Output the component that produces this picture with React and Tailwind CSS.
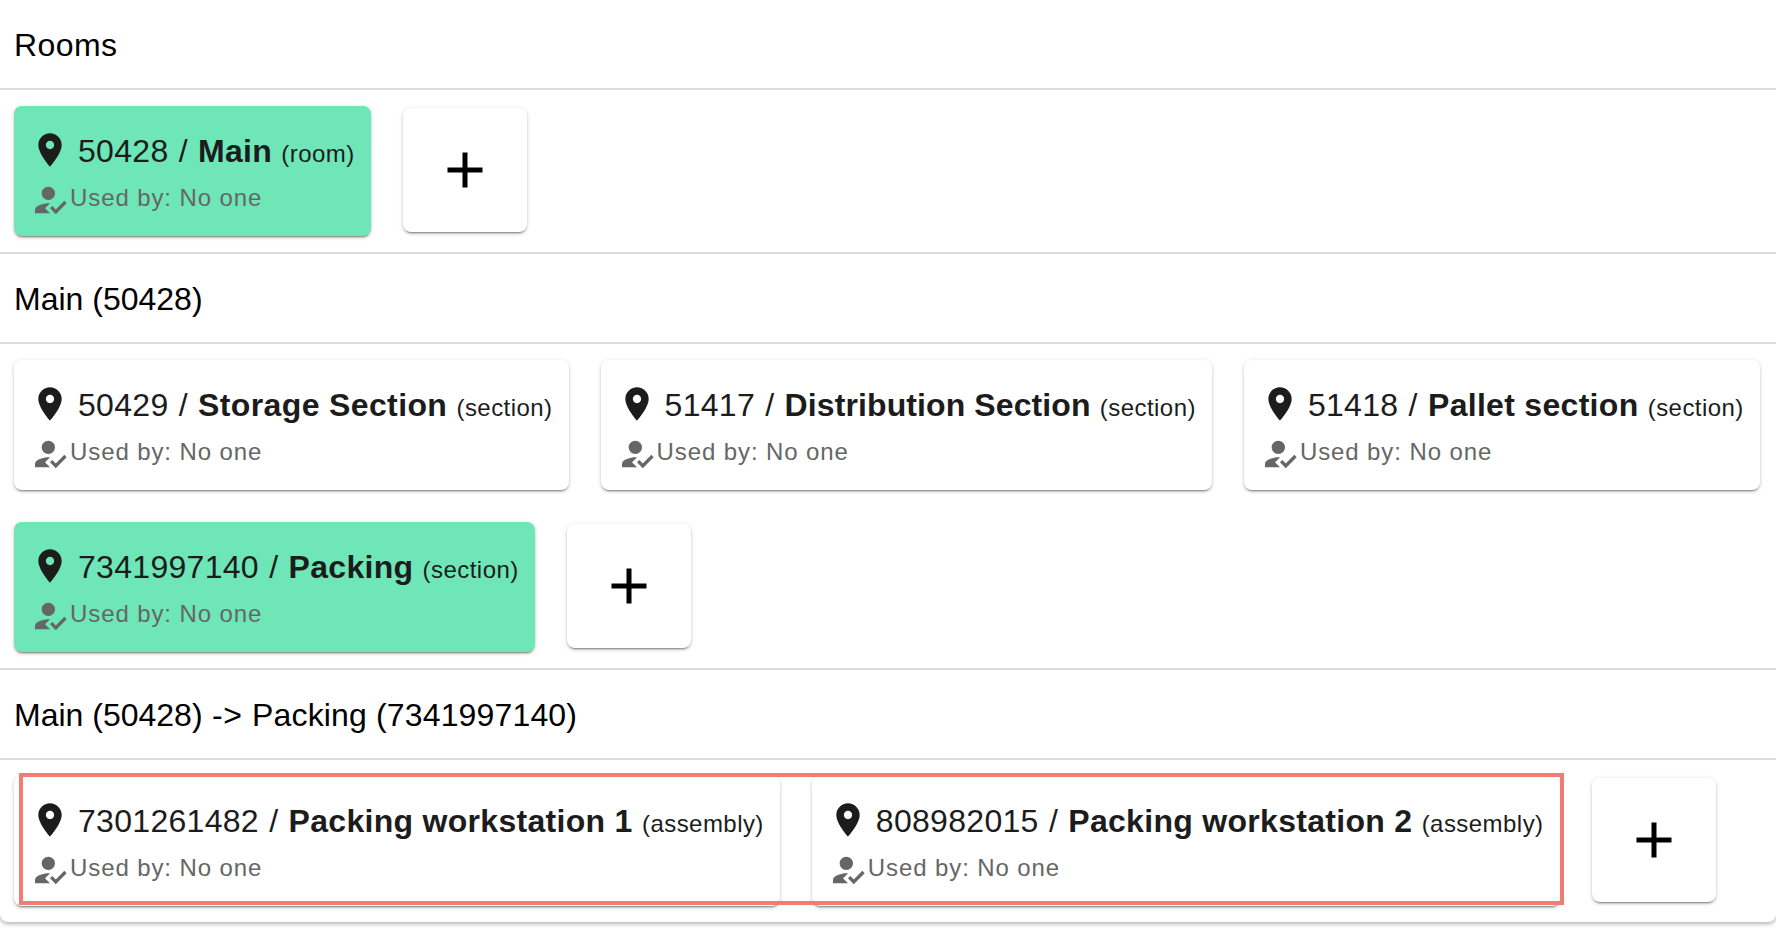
const PIN = "M12 2C8.13 2 5 5.13 5 9c0 5.25 7 13 7 13s7-7.75 7-13c0-3.87-3.13-7-7-7zm0 9.5c-1.38 0-2.5-1.12-2.5-2.5s1.12-2.5 2.5-2.5 2.5 1.12 2.5 2.5-1.12 2.5-2.5 2.5z";
const USER = "M9 17l3-2.94c-.39-.04-.68-.06-1-.06-2.67 0-8 1.34-8 4v2h9l-3-3zm2-5c2.21 0 4-1.79 4-4s-1.79-4-4-4-4 1.79-4 4 1.79 4 4 4m4.47 8.5L12 17l1.4-1.41 2.07 2.08 5.13-5.17 1.4 1.41z";
const PLUS = "M19 13h-6v6h-2v-6H5v-2h6V5h2v6h6v2z";
const SHADOW = "shadow-[0_3px_1px_-2px_rgba(0,0,0,0.25),0_2px_2px_0_rgba(0,0,0,0.17),0_1px_5px_0_rgba(0,0,0,0.14)]";

function Card({ id, name, type, active, nameClass = "" }) {
  return (
    <div className={`h-[130px] rounded-lg p-4 shrink-0 ${SHADOW} ${active ? "bg-[#6ee6b8]" : "bg-white"}`}>
      <div className="flex h-[55px] items-center whitespace-nowrap text-[32px] tracking-[0.3px] text-[#1c1c1c]">
        <svg viewBox="0 0 24 24" className="mr-2 h-10 w-10 shrink-0 fill-[#1c1c1c]"><path d={PIN} /></svg>
        <span className="mt-[2px]">{id}<span className="mx-[1px]"> / </span><b className={`font-bold ${nameClass}`}>{name}</b> <span className="text-2xl tracking-[0.45px]">({type})</span></span>
      </div>
      <div className="mt-[3px] flex h-10 items-center whitespace-nowrap text-2xl tracking-[0.9px] text-[#666666]">
        <svg viewBox="0 0 24 24" className="h-10 w-10 shrink-0 fill-[#666666]"><path d={USER} /></svg>
        <span className="mb-[4px]">Used by: No one</span>
      </div>
    </div>
  );
}

function AddCard() {
  return (
    <div className={`mb-[2px] flex h-[124px] w-[124px] shrink-0 items-center justify-center rounded-lg bg-white ${SHADOW}`}>
      <svg viewBox="0 0 24 24" className="h-[60px] w-[60px] fill-black"><path d={PLUS} /></svg>
    </div>
  );
}

function Heading({ children }) {
  return (
    <div className="flex h-[88px] items-center whitespace-pre px-[14px] pt-[2px] text-[32px] text-black">{children}</div>
  );
}

function Divider() {
  return <div className="h-[2px] bg-[#d9dee3]" />;
}

function Row({ children }) {
  return <div className="flex flex-wrap items-center gap-8 pl-[14px] py-4">{children}</div>;
}

export default function App() {
  return (
    <div className="relative h-[928px] overflow-hidden bg-white font-['Liberation_Sans',Arial,sans-serif]">
      <div className="rounded-b-lg bg-white shadow-[0_2px_4px_rgba(0,0,0,0.3)]">
        <Heading><span className="tracking-[0.4px]">Rooms</span></Heading>
        <Divider />
        <Row>
          <Card id="50428" name="Main" type="room" active />
          <AddCard />
        </Row>
        <Divider />
        <Heading>Main (50428)</Heading>
        <Divider />
        <Row>
          <Card id="50429" name="Storage Section" type="section" nameClass="tracking-[0.37px]" />
          <Card id="51417" name="Distribution Section" type="section" nameClass="tracking-[0.1px]" />
          <Card id="51418" name="Pallet section" type="section" />
          <Card id="7341997140" name="Packing" type="section" active />
          <AddCard />
        </Row>
        <Divider />
        <Heading>Main (50428)<span className="tracking-[0.6px]"> -&gt; </span><span className="tracking-[0.15px]">Packing (7341997140)</span></Heading>
        <Divider />
        <Row>
          <Card id="7301261482" name="Packing workstation 1" type="assembly" />
          <Card id="808982015" name="Packing workstation 2" type="assembly" />
          <AddCard />
        </Row>
      </div>
      <div className="pointer-events-none absolute left-[19px] top-[773px] h-[132px] w-[1545px] border-4 border-[#f27b74]" />
    </div>
  );
}
